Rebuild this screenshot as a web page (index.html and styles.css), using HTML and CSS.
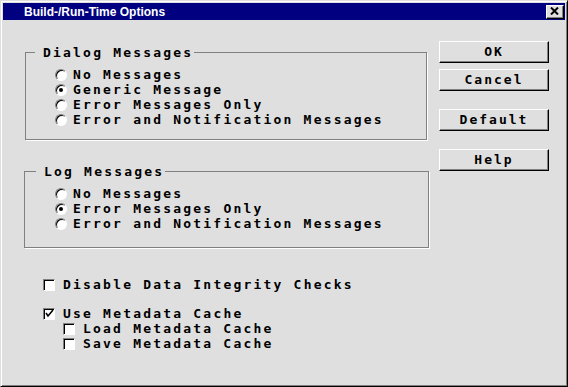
FILE: index.html
```html
<!DOCTYPE html>
<html lang="en">
<head>
    <meta charset="UTF-8">
    <title>Build-/Run-Time Options</title>
    <link rel="stylesheet" href="styles.css">
</head>
<body>
    <div class="window">
        <div class="titlebar">
            <span class="title">Build-/Run-Time Options</span>
            <span class="close">
                <svg width="9" height="8" viewBox="0 0 9 8"><path d="M1 0.5 L8 7.5 M8 0.5 L1 7.5" stroke="#000" stroke-width="2" fill="none"/></svg>
            </span>
        </div>

        <div class="content">
            <div class="panel">
                <fieldset class="group dialog">
                    <legend>Dialog Messages</legend>
                    <div class="option"><span class="radio"></span>No Messages</div>
                    <div class="option"><span class="radio checked"></span>Generic Message</div>
                    <div class="option"><span class="radio"></span>Error Messages Only</div>
                    <div class="option"><span class="radio"></span>Error and Notification Messages</div>
                </fieldset>

                <fieldset class="group log">
                    <legend>Log Messages</legend>
                    <div class="option"><span class="radio"></span>No Messages</div>
                    <div class="option"><span class="radio checked"></span>Error Messages Only</div>
                    <div class="option"><span class="radio"></span>Error and Notification Messages</div>
                </fieldset>

                <div class="checks">
                    <div class="check-row"><span class="checkbox"></span>Disable Data Integrity Checks</div>
                    <div class="check-row spaced">
                        <span class="checkbox">
                            <svg width="9" height="9" viewBox="0 0 9 9"><polyline points="1,4 3,7 8,1" fill="none" stroke="#000" stroke-width="1.6"/></svg>
                        </span>Use Metadata Cache
                    </div>
                    <div class="check-row sub"><span class="checkbox"></span>Load Metadata Cache</div>
                    <div class="check-row sub"><span class="checkbox"></span>Save Metadata Cache</div>
                </div>
            </div>

            <div class="buttons">
                <div class="btn">OK</div>
                <div class="btn">Cancel</div>
                <div class="btn far">Default</div>
                <div class="btn far">Help</div>
            </div>
        </div>
    </div>
</body>
</html>
```

FILE: styles.css
```css
* {
    margin: 0;
    padding: 0;
    box-sizing: border-box;
}

body {
    background: #dfdfdf;
    font-family: 'DejaVu Sans Mono', 'Liberation Mono', monospace;
    font-weight: bold;
    font-size: 13px;
    color: #000;
}

.window {
    width: 568px;
    height: 387px;
    background: #dfdfdf;
    border: 1px solid;
    border-color: #dfdfdf #000 #000 #dfdfdf;
    box-shadow: inset 1px 1px 0 #fff, inset -1px -1px 0 #808080;
    padding: 2px;
}

.titlebar {
    height: 17px;
    background: #000080;
    display: flex;
    align-items: center;
    justify-content: space-between;
}

.title {
    font-family: 'Liberation Sans', Arial, sans-serif;
    font-size: 12px;
    font-weight: bold;
    color: #fff;
    margin-left: 21px;
}

.close {
    width: 18px;
    height: 14px;
    margin-right: 1px;
    background: #dfdfdf;
    border: 1px solid;
    border-color: #fff #000 #000 #fff;
    box-shadow: inset -1px -1px 0 #808080;
    display: flex;
    align-items: center;
    justify-content: center;
    padding-right: 1px;
    padding-bottom: 1px;
}

.content {
    display: flex;
}

.panel {
    margin-left: 22px;
}

.group {
    border: 1px solid #808080;
    box-shadow: 1px 1px 0 #fff;
    margin-top: 25px;
    padding: 7px 0 12px 0;
}

.group legend {
    line-height: 15px;
    margin-left: 9px;
    padding: 0 1px 0 8px;
    letter-spacing: 2.2px;
}

.dialog {
    width: 402px;
}

.log {
    width: 405px;
    margin-left: -1px;
    margin-top: 24px;
    padding-bottom: 16px;
}

.log legend {
    margin-left: 11px;
}

.option {
    display: flex;
    align-items: center;
    height: 15px;
    margin-left: 29px;
    letter-spacing: 2.2px;
    white-space: nowrap;
}

.log .option {
    margin-left: 30px;
}

.radio {
    width: 12px;
    height: 12px;
    border-radius: 50%;
    background: #fff;
    border: 1px solid;
    border-color: #808080 #fff #fff #808080;
    box-shadow: inset 1px 1px 0 #000;
    margin-right: 6px;
    position: relative;
    flex: none;
}

.radio.checked::after {
    content: '';
    position: absolute;
    left: 3px;
    top: 3px;
    width: 4px;
    height: 4px;
    border-radius: 50%;
    background: #000;
}

.checks {
    margin-top: 29px;
    padding-left: 18px;
}

.check-row {
    display: flex;
    align-items: center;
    height: 15px;
    letter-spacing: 2.2px;
    white-space: nowrap;
}

.check-row.spaced {
    margin-top: 14px;
}

.check-row.sub {
    padding-left: 20px;
}

.checkbox {
    width: 12px;
    height: 12px;
    background: #fff;
    border: 1px solid;
    border-color: #808080 #fff #fff #808080;
    box-shadow: inset 1px 1px 0 #000;
    margin-right: 8px;
    display: flex;
    align-items: center;
    justify-content: center;
    flex: none;
}

.buttons {
    margin-left: auto;
    margin-right: 16px;
    margin-top: 21px;
    display: flex;
    flex-direction: column;
    gap: 6px;
}

.btn {
    width: 110px;
    height: 22px;
    border: 1px solid;
    border-color: #fff #000 #000 #fff;
    box-shadow: inset -1px -1px 0 #808080;
    text-align: center;
    line-height: 19px;
    letter-spacing: 2px;
}

.btn.far {
    margin-top: 12px;
}
```
